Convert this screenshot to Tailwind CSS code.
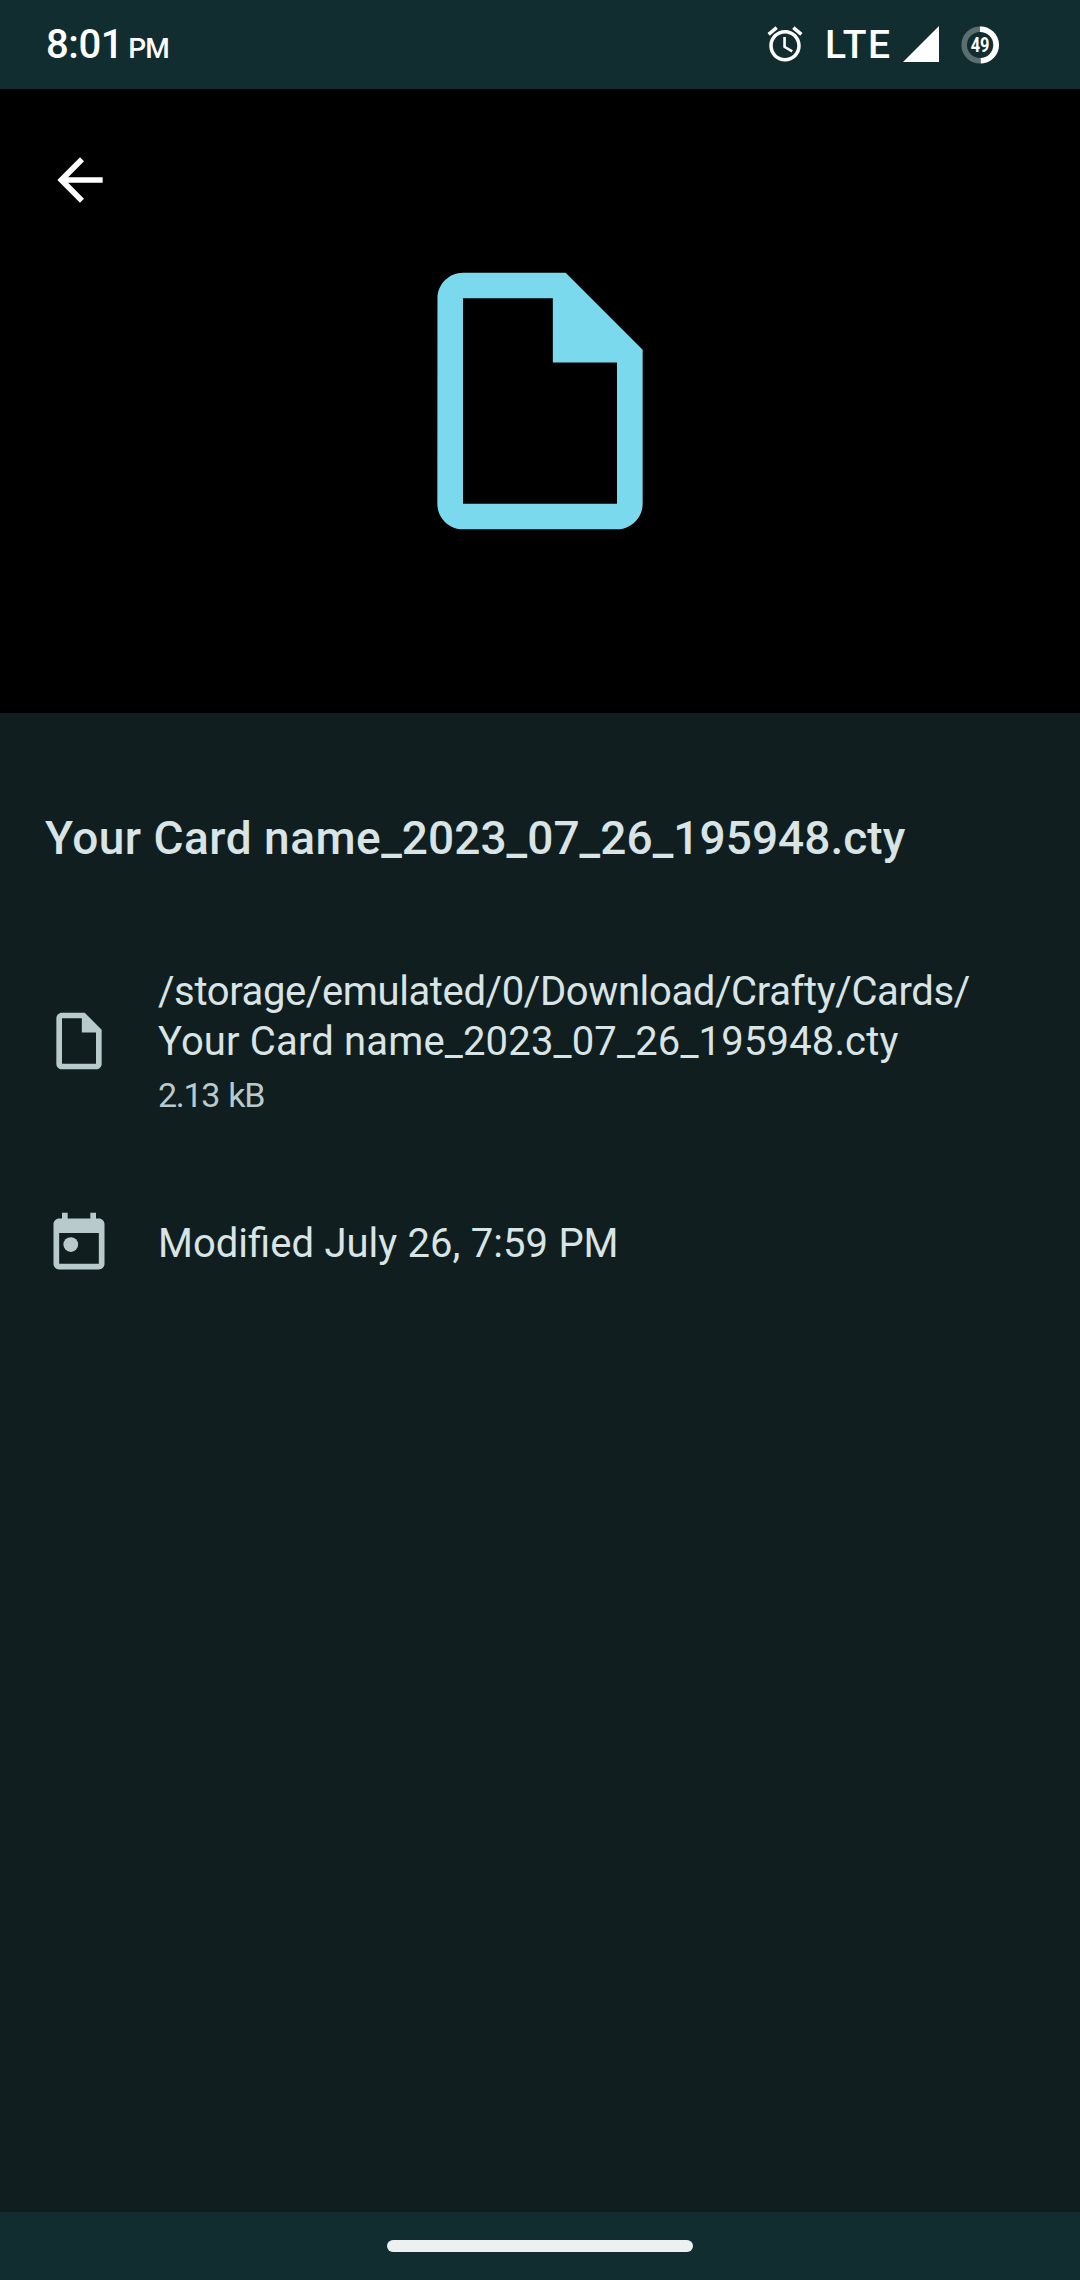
<!DOCTYPE html>
<html lang="en">
<head>
<meta charset="utf-8">
<title>File details</title>
<script src="https://cdn.jsdelivr.net/npm/@tailwindcss/browser@4"></script>
</head>
<body class="flex h-[2280px] w-[1080px] flex-col overflow-hidden bg-[#111e1f] font-['Roboto',sans-serif] text-[#d8e4e5]">
  <header class="flex h-[89px] shrink-0 items-center bg-[#112d2f] pl-[46px] pr-[81px] text-white">
    <div class="flex items-baseline pt-[4px] font-medium leading-[48px]">
      <span class="text-[40px] tracking-[-0.4px]">8:01</span>
      <span class="ml-[5px] text-[28px] tracking-[-0.8px]">PM</span>
    </div>
    <div class="ml-auto flex items-center">
      <svg class="mb-[2px] size-[42px]" viewBox="0 0 24 24" fill="currentColor"><path d="M22 5.72l-4.6-3.86-1.29 1.53 4.6 3.86L22 5.72zM7.88 3.39L6.6 1.86 2 5.71l1.29 1.53 4.59-3.85zM12.5 8H11v6l4.75 2.85.75-1.23-4-2.37V8zM12 4c-4.97 0-9 4.03-9 9s4.02 9 9 9c4.97 0 9-4.03 9-9s-4.03-9-9-9zm0 16c-3.87 0-7-3.13-7-7s3.13-7 7-7 7 3.13 7 7-3.13 7-7 7z"/></svg>
      <span class="ml-[19px] w-[78px] text-[39px] font-medium leading-[48px] tracking-[1.4px]">LTE</span>
      <svg class="mb-px h-[36px] w-[36px]" viewBox="0 0 36 36" fill="currentColor"><path d="M36 0v36H0z"/></svg>
      <svg class="ml-[22px] size-[38px]" viewBox="0 0 38 38" fill="none" stroke-width="5.6">
        <circle cx="19" cy="19" r="15.8" stroke="#5b6e70"/>
        <path d="M19 3.2a15.8 15.8 0 0 1 .8 31.6" stroke="#fff"/>
        <text x="9.7" y="26.4" textLength="18.8" lengthAdjust="spacingAndGlyphs" fill="#fff" font-size="20" font-weight="700">49</text>
      </svg>
    </div>
  </header>

  <section class="grid h-[624px] shrink-0 bg-black">
    <button class="col-start-1 row-start-1 ml-[46px] mt-[57px] size-[68px] self-start justify-self-start text-white" aria-label="Back">
      <svg class="size-[68px]" viewBox="0 0 24 24" fill="currentColor"><path d="M20 11H7.83l5.59-5.59L12 4l-8 8 8 8 1.41-1.41L7.83 13H20v-2z"/></svg>
    </button>
    <svg class="col-start-1 row-start-1 size-[308px] place-self-center text-[#7ad9ec]" viewBox="0 0 24 24" fill="currentColor"><path fill-rule="evenodd" d="M14 2H6C4.900 2 4.010 2.900 4.010 4L4 20C4 21.100 4.890 22 5.990 22H18C19.100 22 20 21.100 20 20V8L14 2zM6 20V4h7v5h5v11H6z"/></svg>
  </section>

  <main class="flex flex-col pl-[45px]">
    <h1 class="mt-[98px] whitespace-nowrap text-[46px] font-medium leading-[54px]"><span class="tracking-[0.5px]">Your Card name</span><span class="tracking-[0.05px]">_2023_07_26_195948.cty</span></h1>
    <div class="mt-[101px] flex items-center">
      <svg class="mb-[2px] size-[68px] text-[#b9cacc]" viewBox="0 0 24 24" fill="currentColor"><path fill-rule="evenodd" d="M14 2H6C4.900 2 4.010 2.900 4.010 4L4 20C4 21.100 4.890 22 5.990 22H18C19.100 22 20 21.100 20 20V8L14 2zM6 20V4h7v5h5v11H6z"/></svg>
      <div class="ml-[45px] whitespace-nowrap pt-px">
        <p class="text-[40px] leading-[50px] tracking-[-0.38px]">/storage/emulated/0/Download/Crafty/Cards/</p>
        <p class="text-[40px] leading-[50px] tracking-[0.15px]">Your Card name_2023_07_26_195948.cty</p>
        <p class="mt-[6px] text-[34px] leading-[44px] tracking-[-1.3px] text-[#b9cacc] [word-spacing:2px]">2.13 kB</p>
      </div>
    </div>
    <div class="mt-[93px] flex items-center">
      <svg class="size-[68px] text-[#b9cacc]" viewBox="0 0 24 24" fill="currentColor"><path fill-rule="evenodd" d="M19 3h-1V1h-2v2H8V1H6v2H5c-1.110 0-2 .9-2 2v14c0 1.100.89 2 2 2h14c1.100 0 2-.9 2-2V5c0-1.100-.9-2-2-2zM5 19V8.100h14V19H5z"/><circle cx="9.100" cy="12.200" r="2.600"/></svg>
      <p class="ml-[45px] whitespace-nowrap text-[40px] leading-[50px] [word-spacing:0.5px]">Modified July 26, 7:59 PM</p>
    </div>
  </main>

  <footer class="mt-auto flex h-[68px] shrink-0 items-center justify-center bg-[#112d2f]">
    <div class="h-[12px] w-[306px] rounded-full bg-[#ecf0f0]"></div>
  </footer>
</body>
</html>
